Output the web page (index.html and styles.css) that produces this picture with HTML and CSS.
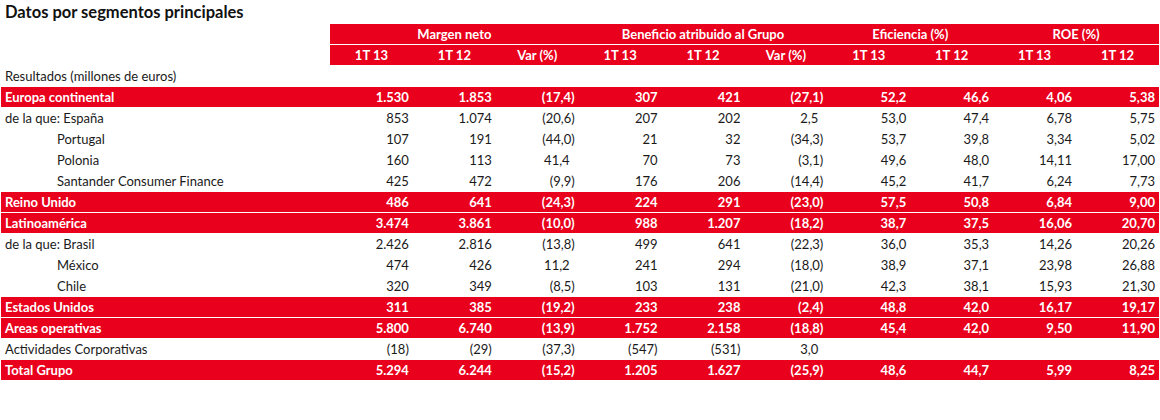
FILE: index.html
```html
<!DOCTYPE html>
<html lang="es">
<head>
<meta charset="utf-8">
<title>Datos por segmentos principales</title>
<link rel="stylesheet" href="styles.css">
</head>
<body>
<div class="page">
  <h1 class="title">Datos por segmentos principales</h1>
  <table class="seg">
    <colgroup>
      <col class="c-label">
      <col><col><col><col><col><col><col><col><col><col>
    </colgroup>
    <thead>
      <tr class="grp">
        <th class="blank"></th>
        <th colspan="3">Margen neto</th>
        <th colspan="3">Beneficio atribuido al Grupo</th>
        <th colspan="2">Eficiencia (%)</th>
        <th colspan="2">ROE (%)</th>
      </tr>
      <tr class="sub">
        <th class="blank"></th>
        <th>1T 13</th><th>1T 12</th><th>Var (%)</th>
        <th>1T 13</th><th>1T 12</th><th>Var (%)</th>
        <th>1T 13</th><th>1T 12</th>
        <th>1T 13</th><th>1T 12</th>
      </tr>
    </thead>
    <tbody>
      <tr class="caption-row"><td class="lbl" colspan="11">Resultados (millones de euros)</td></tr>
      <tr class="hl"><td class="lbl">Europa continental</td><td>1.530</td><td>1.853</td><td>(17,4)</td><td>307</td><td>421</td><td>(27,1)</td><td>52,2</td><td>46,6</td><td>4,06</td><td>5,38</td></tr>
      <tr><td class="lbl">de la que: España</td><td>853</td><td>1.074</td><td>(20,6)</td><td>207</td><td>202</td><td class="pos">2,5</td><td>53,0</td><td>47,4</td><td>6,78</td><td>5,75</td></tr>
      <tr><td class="lbl ind">Portugal</td><td>107</td><td>191</td><td>(44,0)</td><td>21</td><td>32</td><td>(34,3)</td><td>53,7</td><td>39,8</td><td>3,34</td><td>5,02</td></tr>
      <tr><td class="lbl ind">Polonia</td><td>160</td><td>113</td><td class="pos">41,4</td><td>70</td><td>73</td><td>(3,1)</td><td>49,6</td><td>48,0</td><td>14,11</td><td>17,00</td></tr>
      <tr><td class="lbl ind">Santander Consumer Finance</td><td>425</td><td>472</td><td>(9,9)</td><td>176</td><td>206</td><td>(14,4)</td><td>45,2</td><td>41,7</td><td>6,24</td><td>7,73</td></tr>
      <tr class="hl"><td class="lbl">Reino Unido</td><td>486</td><td>641</td><td>(24,3)</td><td>224</td><td>291</td><td>(23,0)</td><td>57,5</td><td>50,8</td><td>6,84</td><td>9,00</td></tr>
      <tr class="hl"><td class="lbl">Latinoamérica</td><td>3.474</td><td>3.861</td><td>(10,0)</td><td>988</td><td>1.207</td><td>(18,2)</td><td>38,7</td><td>37,5</td><td>16,06</td><td>20,70</td></tr>
      <tr><td class="lbl">de la que: Brasil</td><td>2.426</td><td>2.816</td><td>(13,8)</td><td>499</td><td>641</td><td>(22,3)</td><td>36,0</td><td>35,3</td><td>14,26</td><td>20,26</td></tr>
      <tr><td class="lbl ind">México</td><td>474</td><td>426</td><td class="pos">11,2</td><td>241</td><td>294</td><td>(18,0)</td><td>38,9</td><td>37,1</td><td>23,98</td><td>26,88</td></tr>
      <tr><td class="lbl ind">Chile</td><td>320</td><td>349</td><td>(8,5)</td><td>103</td><td>131</td><td>(21,0)</td><td>42,3</td><td>38,1</td><td>15,93</td><td>21,30</td></tr>
      <tr class="hl"><td class="lbl">Estados Unidos</td><td>311</td><td>385</td><td>(19,2)</td><td>233</td><td>238</td><td>(2,4)</td><td>48,8</td><td>42,0</td><td>16,17</td><td>19,17</td></tr>
      <tr class="hl"><td class="lbl">Areas operativas</td><td>5.800</td><td>6.740</td><td>(13,9)</td><td>1.752</td><td>2.158</td><td>(18,8)</td><td>45,4</td><td>42,0</td><td>9,50</td><td>11,90</td></tr>
      <tr><td class="lbl">Actividades Corporativas</td><td>(18)</td><td>(29)</td><td>(37,3)</td><td>(547)</td><td>(531)</td><td class="pos">3,0</td><td></td><td></td><td></td><td></td></tr>
      <tr class="hl"><td class="lbl">Total Grupo</td><td>5.294</td><td>6.244</td><td>(15,2)</td><td>1.205</td><td>1.627</td><td>(25,9)</td><td>48,6</td><td>44,7</td><td>5,99</td><td>8,25</td></tr>
    </tbody>
  </table>
</div>
</body>
</html>
```
FILE: styles.css
```css
html, body {
  margin: 0;
  padding: 0;
  background: #ffffff;
}

.page {
  padding: 0 1px 0 1px;
  font-family: Lato, "Liberation Sans", sans-serif;
  color: #1a1a1a;
}

.title {
  margin: 0;
  padding: 3px 0 0 4px;
  height: 20px;
  font-size: 16.5px;
  line-height: 18px;
  font-weight: 700;
  color: #111;
}

.seg {
  width: 1158px;
  border-collapse: collapse;
  table-layout: fixed;
  font-size: 13px;
}

.c-label {
  width: 329px;
}

.seg th,
.seg td {
  height: 20px;
  padding: 0 4px 0 4px;
  border-top: 1px solid #ffffff;
  line-height: 20px;
  white-space: nowrap;
  overflow: hidden;
}

.seg th {
  height: 20px;
  background: #e8001c;
  color: #ffffff;
  font-weight: 700;
  text-align: center;
}

.seg th.blank {
  background: #ffffff;
}

.seg td {
  text-align: right;
}

.seg td.lbl {
  text-align: left;
}

.seg td.ind {
  padding-left: 56px;
}

.seg td.pos {
  padding-right: 9px;
}

.seg .hl td {
  background: #e8001c;
  color: #ffffff;
  font-weight: 700;
}
```
